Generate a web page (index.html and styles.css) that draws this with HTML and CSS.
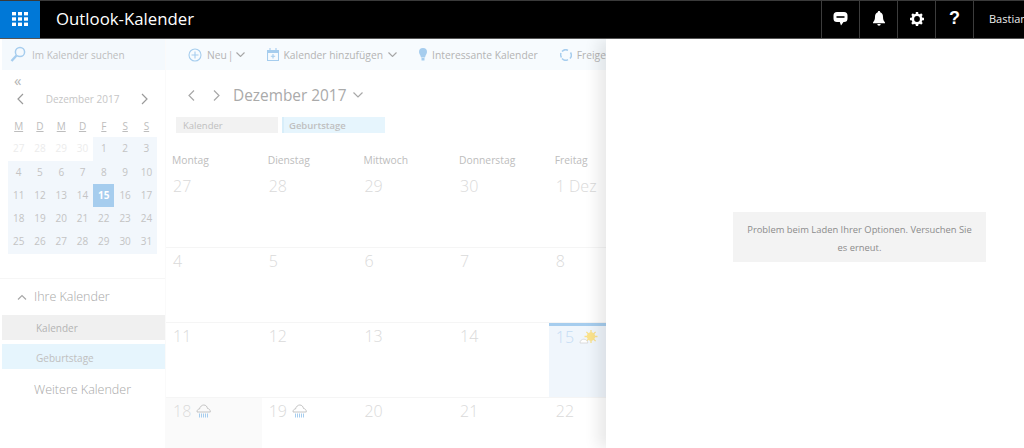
FILE: index.html
```html
<!DOCTYPE html>
<html lang="de">
<head>
<meta charset="utf-8">
<title>Outlook-Kalender</title>
<link rel="stylesheet" href="styles.css">
</head>
<body>
<header class="topbar">
  <div class="waffle">
    <svg width="16" height="14" viewBox="0 0 16 14" fill="#fff"><rect x="0" y="0" width="4" height="3.4"/><rect x="6" y="0" width="4" height="3.4"/><rect x="12" y="0" width="4" height="3.4"/><rect x="0" y="5.3" width="4" height="3.4"/><rect x="6" y="5.3" width="4" height="3.4"/><rect x="12" y="5.3" width="4" height="3.4"/><rect x="0" y="10.6" width="4" height="3.4"/><rect x="6" y="10.6" width="4" height="3.4"/><rect x="12" y="10.6" width="4" height="3.4"/></svg>
  </div>
  <div class="brand">Outlook-Kalender</div>
  <nav class="top-actions">
    <div class="top-btn"><svg width="15" height="14" viewBox="0 0 15 14"><path fill="#fff" d="M4 0h7a3.500 3.500 0 0 1 3.500 3.500v3A3.500 3.500 0 0 1 11 10h-.5L8 13.500 6.800 10H4A3.500 3.500 0 0 1 .5 6.500v-3A3.500 3.500 0 0 1 4 0z"/><rect x="3.500" y="4" width="8" height="2" fill="#333"/></svg></div>
    <div class="top-btn"><svg width="12" height="15" viewBox="0 0 12 15" fill="#fff"><path d="M6 0c.8 0 1.200.5 1.200 1.200C9.200 1.800 10 3.500 10 6c0 2.500.8 4 2 5.500v.8H0v-.8C1.200 10 2 8.500 2 6c0-2.500.8-4.200 2.800-4.800C4.800.5 5.200 0 6 0z"/><path d="M4.300 13h3.400a1.700 1.700 0 0 1-3.400 0z"/></svg></div>
    <div class="top-btn"><svg width="14" height="14" viewBox="0 0 15 15"><circle cx="7.500" cy="7.500" r="4.500" fill="none" stroke="#fff" stroke-width="2.800"/><g stroke="#fff" stroke-width="2.600"><path d="M7.500 0v3M7.500 12v3M0 7.500h3M12 7.500h3M2.200 2.200l2 2M10.800 10.800l2 2M2.200 12.800l2-2M10.800 4.200l2-2"/></g></svg></div>
    <div class="top-btn help">?</div>
    <div class="top-user">Bastian</div>
  </nav>
</header>

<div class="app">
  <aside class="sidebar">
    <div class="search">
      <svg width="16" height="17" viewBox="0 0 16 17" fill="none" stroke="#a6cdee"><circle cx="10" cy="6" r="4.600" stroke-width="1.500"/><path d="M6.500 9.500L1.500 15" stroke-width="2.400"/></svg>
      <span>Im Kalender suchen</span>
    </div>
    <div class="collapse">«</div>
    <div class="mini-head">
      <svg class="chev" width="8" height="12" viewBox="0 0 8 12" fill="none" stroke="#9a9a9a" stroke-width="1.200"><path d="M7 1L2 6l5 5"/></svg>
      <span>Dezember 2017</span>
      <svg class="chev" width="8" height="12" viewBox="0 0 8 12" fill="none" stroke="#9a9a9a" stroke-width="1.200"><path d="M1 1l5 5-5 5"/></svg>
    </div>
    <div class="mini-grid">
      <div class="dow">M</div><div class="dow">D</div><div class="dow">M</div><div class="dow">D</div><div class="dow">F</div><div class="dow">S</div><div class="dow">S</div>
      <div class="d off">27</div><div class="d off">28</div><div class="d off">29</div><div class="d off">30</div><div class="d in">1</div><div class="d in">2</div><div class="d in">3</div>
      <div class="d in">4</div><div class="d in">5</div><div class="d in">6</div><div class="d in">7</div><div class="d in">8</div><div class="d in">9</div><div class="d in">10</div>
      <div class="d in">11</div><div class="d in">12</div><div class="d in">13</div><div class="d in">14</div><div class="d today">15</div><div class="d in">16</div><div class="d in">17</div>
      <div class="d in">18</div><div class="d in">19</div><div class="d in">20</div><div class="d in">21</div><div class="d in">22</div><div class="d in">23</div><div class="d in">24</div>
      <div class="d in">25</div><div class="d in">26</div><div class="d in">27</div><div class="d in">28</div><div class="d in">29</div><div class="d in">30</div><div class="d in">31</div>
    </div>
    <div class="cal-section">
      <div class="cal-title">
        <svg width="10" height="6" viewBox="0 0 10 6" fill="none" stroke="#a8a8a8" stroke-width="1.200"><path d="M1 5.500l4-4 4 4"/></svg>
        <span>Ihre Kalender</span>
      </div>
      <div class="cal-item grey">Kalender</div>
      <div class="cal-item blue">Geburtstage</div>
      <div class="cal-more">Weitere Kalender</div>
    </div>
  </aside>

  <main class="content">
    <div class="toolbar">
      <div class="tool">
        <svg width="14" height="14" viewBox="0 0 14 14" fill="none" stroke="#a6cdee" stroke-width="1.100"><circle cx="7" cy="7" r="6"/><path d="M7 3.500v7M3.500 7h7"/></svg>
        <span>Neu</span><i class="bar">|</i>
        <svg class="caret" width="9" height="5" viewBox="0 0 9 5" fill="none" stroke="#a6a6a6" stroke-width="1.100"><path d="M.5.500l4 4 4-4"/></svg>
      </div>
      <div class="tool">
        <svg width="12" height="13" viewBox="0 0 12 13" fill="none" stroke="#a6cdee" stroke-width="1.100"><path d="M.5 2.500h11v10H.5z"/><path d="M.5 2.500h11v2H.5z" fill="#a6cdee"/><path d="M3 0v2M9 0v2M6 6v4.500M3.800 8.200h4.400"/></svg>
        <span>Kalender hinzufügen</span>
        <svg class="caret" width="9" height="5" viewBox="0 0 9 5" fill="none" stroke="#a6a6a6" stroke-width="1.100"><path d="M.5.500l4 4 4-4"/></svg>
      </div>
      <div class="tool">
        <svg width="8" height="13" viewBox="0 0 8 13" fill="#a6cdee"><path d="M4 0a4 4 0 0 1 4 4c0 2-1.500 3-2 5.500H2C1.500 7 0 6 0 4a4 4 0 0 1 4-4z"/><rect x="2.500" y="10" width="3" height="2.500"/></svg>
        <span>Interessante Kalender</span>
      </div>
      <div class="tool">
        <svg width="12" height="12" viewBox="0 0 12 12" fill="none" stroke="#a6cdee" stroke-width="1.500"><path d="M2 2.500A5 5 0 0 1 8 1.300M10.500 3.500A5 5 0 0 1 10 9.500M8 10.700A5 5 0 0 1 2 9.500M1.500 8.500A5 5 0 0 1 1 4"/></svg>
        <span>Freigeben</span>
      </div>
    </div>

    <div class="month-nav">
      <svg width="7" height="11" viewBox="0 0 7 11" fill="none" stroke="#a8a8a8" stroke-width="1.200"><path d="M6 .5l-5 5 5 5"/></svg>
      <svg width="7" height="11" viewBox="0 0 7 11" fill="none" stroke="#a8a8a8" stroke-width="1.200"><path d="M1 .5l5 5-5 5"/></svg>
      <span class="month-title">Dezember 2017</span>
      <svg width="10" height="6" viewBox="0 0 10 6" fill="none" stroke="#a8a8a8" stroke-width="1.200"><path d="M.5.500l4.500 4.500 4.500-4.500"/></svg>
    </div>

    <div class="legend">
      <div class="chip grey">Kalender</div>
      <div class="chip blue">Geburtstage</div>
    </div>

    <div class="week-head">
      <div>Montag</div><div>Dienstag</div><div>Mittwoch</div><div>Donnerstag</div><div>Freitag</div>
    </div>
    <div class="month-grid">
      <div class="cell"><b>27</b></div><div class="cell"><b>28</b></div><div class="cell"><b>29</b></div><div class="cell"><b>30</b></div><div class="cell"><b>1 Dez</b></div>
      <div class="cell"><b>4</b></div><div class="cell"><b>5</b></div><div class="cell"><b>6</b></div><div class="cell"><b>7</b></div><div class="cell"><b>8</b></div>
      <div class="cell"><b>11</b></div><div class="cell"><b>12</b></div><div class="cell"><b>13</b></div><div class="cell"><b>14</b></div>
      <div class="cell now"><b>15</b>
        <svg width="19" height="14" viewBox="0 0 19 14"><g stroke="#f9e08a" stroke-width="1.300"><path d="M12 0v13M5.500 6.500h13M7.400 1.900l9.200 9.200M16.600 1.900l-9.200 9.200"/></g><circle cx="12" cy="6.500" r="4.200" fill="#fbe38c"/><path d="M1 13c0-2.500 1.800-3.800 3.800-3.800s3.800 1.300 4 3.800z" fill="#fff" stroke="#d4d4d4" stroke-width=".8"/></svg>
      </div>
      <div class="cell past"><b>18</b>
        <svg class="rain" width="15" height="14" viewBox="0 0 15 14" fill="none"><path d="M1 8c0-2.500 1.500-3 2.500-3C4 2.500 6 1 7.800 1c2 0 3.400 1.500 3.700 3.500C13 4.500 14.500 6 14.300 8z" stroke="#c4c4c4"/><path d="M3.500 9.500v4M5.500 9.500v4M7.500 9.500v4M9.500 9.500v4M11.500 9.500v4" stroke="#a6cdee"/></svg>
      </div>
      <div class="cell"><b>19</b>
        <svg class="rain" width="15" height="14" viewBox="0 0 15 14" fill="none"><path d="M1 8c0-2.500 1.500-3 2.500-3C4 2.500 6 1 7.800 1c2 0 3.400 1.500 3.700 3.500C13 4.500 14.500 6 14.300 8z" stroke="#c4c4c4"/><path d="M3.500 9.500v4M5.500 9.500v4M7.500 9.500v4M9.500 9.500v4M11.500 9.500v4" stroke="#a6cdee"/></svg>
      </div>
      <div class="cell"><b>20</b></div><div class="cell"><b>21</b></div><div class="cell"><b>22</b></div>
    </div>
  </main>

  <section class="panel">
    <div class="error">Problem beim Laden Ihrer Optionen. Versuchen Sie es erneut.</div>
  </section>
</div>
</body>
</html>
```
FILE: styles.css
```css
* { box-sizing: border-box; }
html, body { margin: 0; height: 448px; overflow: hidden; }
body { font-family: "Open Sans", "Noto Sans", "Liberation Sans", sans-serif; background: #fff; color: #bbb; }

.topbar { height: 39px; display: flex; background: #000; border-top: 1px solid #3a3a3a; border-bottom: 1px solid #555; }
.waffle { width: 40px; background: #0078d7; display: flex; align-items: center; justify-content: center; padding-bottom: 1px; }
.brand { margin-left: 16px; font-size: 16.800px; line-height: 35px; color: #fff; }
.top-actions { margin-left: auto; display: flex; }
.top-btn { width: 38px; border-left: 1px solid #3c3c3c; display: flex; align-items: center; justify-content: center; padding-bottom: 2px; color: #fff; }
.help { font-size: 18px; font-weight: 700; font-family: "Liberation Sans", sans-serif; }
.top-user { width: 51px; padding-left: 15px; border-left: 1px solid #3c3c3c; font-size: 11px; line-height: 35px; color: #eee; white-space: nowrap; overflow: hidden; }

.app { position: relative; display: flex; height: 409px; overflow: hidden; }

.sidebar { width: 166px; flex: none; border-right: 1px solid #fafafa; }
.search { height: 31px; margin-left: 2px; background: #f4f9fd; display: flex; align-items: center; gap: 14px; padding-left: 8px; font-size: 10px; color: #bdbdbd; }
.search svg { margin-right: -8px; }
.collapse { height: 20px; padding-left: 14px; font-size: 15px; line-height: 20px; color: #b4b4b4; }
.mini-head { height: 18px; display: flex; align-items: center; justify-content: space-between; padding: 0 16px; font-size: 10px; color: #c6c6c6; }
.mini-grid { display: grid; grid-template-columns: repeat(7, 21.300px); grid-auto-rows: 23.260px; margin: 6px 0 0 8px; font-size: 10px; }
.dow { line-height: 24px; text-align: center; color: #bdbdbd; text-decoration: underline; text-underline-offset: 1px; }
.d { display: flex; align-items: center; justify-content: center; padding-bottom: 1px; color: #c4c4c4; }
.d.off { color: #ececec; }
.d.in { background: #f2f7fc; }
.d.today { background: #a6cdee; color: #fff; font-weight: 700; }

.cal-section { margin-top: 24px; border-top: 1px solid #f6f6f6; padding-top: 7px; }
.cal-title { height: 22px; display: flex; align-items: center; gap: 7px; padding-left: 17px; font-size: 12.500px; font-weight: 300; color: #a8a8a8; }
.cal-item { height: 25px; margin: 0 0 4px 2px; padding-left: 34px; font-size: 10px; line-height: 27px; color: #b4b4b4; }
.cal-item.grey { margin-top: 7px; background: #f0f0f0; }
.cal-item.blue { background: #e6f5fd; color: #c0c0c0; line-height: 28px; }
.cal-more { padding-left: 34px; margin-top: 12px; font-size: 12.500px; line-height: 18px; font-weight: 300; color: #a8a8a8; }

.content { flex: 1; min-width: 0; display: flex; flex-direction: column; }
.toolbar { height: 31px; flex: none; background: #f7fbfe; display: flex; align-items: center; gap: 22px; padding-left: 22px; font-size: 10.300px; color: #b4b4b4; white-space: nowrap; overflow: hidden; }
.tool { display: flex; align-items: center; gap: 5px; }
.bar { font-style: normal; margin: 0 -3px 0 -4px; }
.month-nav { height: 24px; margin-top: 13px; flex: none; display: flex; align-items: center; gap: 18px; padding-left: 22px; color: #aaa; }
.month-title { font-size: 15.400px; margin-left: -5px; margin-right: -11px; }
.legend { margin-top: 10px; height: 16px; flex: none; display: flex; gap: 4px; padding-left: 10px; }
.chip { width: 102px; padding-left: 7px; font-size: 9.500px; line-height: 18px; color: #c0c0c0; }
.chip.grey { background: #f2f2f2; }
.chip.blue { width: 103px; background: #e6f5fd; font-weight: 600; border-left: 2px solid #d8eefa; padding-left: 5px; }
.week-head { display: grid; grid-template-columns: repeat(5, 95.700px); height: 23.500px; margin-top: 16px; flex: none; font-size: 10.300px; line-height: 22px; color: #bdbdbd; }
.week-head div { padding-left: 6px; }
.month-grid { display: grid; grid-template-columns: repeat(5, 95.700px); grid-auto-rows: 75px; flex: none; }
.cell { border-bottom: 1px solid #f5f5f5; padding: 2px 7px; display: flex; align-items: flex-start; gap: 5px; }
.cell b { font-weight: 300; font-size: 16px; line-height: 22px; color: #dadada; }
.cell.now { border-top: 3px solid #a6cdee; background: #f0f6fc; padding-top: 0; }
.cell.now b { color: #c4dcf4; }
.cell.now svg { margin-top: 4px; }
.cell.past { background: #fafafa; }
.rain { margin-top: 4px; }

.panel { position: absolute; top: 0; left: 606px; right: 0; bottom: 0; background: #fff; box-shadow: -8px 0 14px rgba(0, 0, 0, .09); padding: 173px 0 0 127px; }
.error { width: 253px; height: 50px; padding: 9px 12px 0; background: #f3f3f3; font-size: 9.400px; line-height: 17.500px; text-align: center; color: #8c8c8c; }
```
